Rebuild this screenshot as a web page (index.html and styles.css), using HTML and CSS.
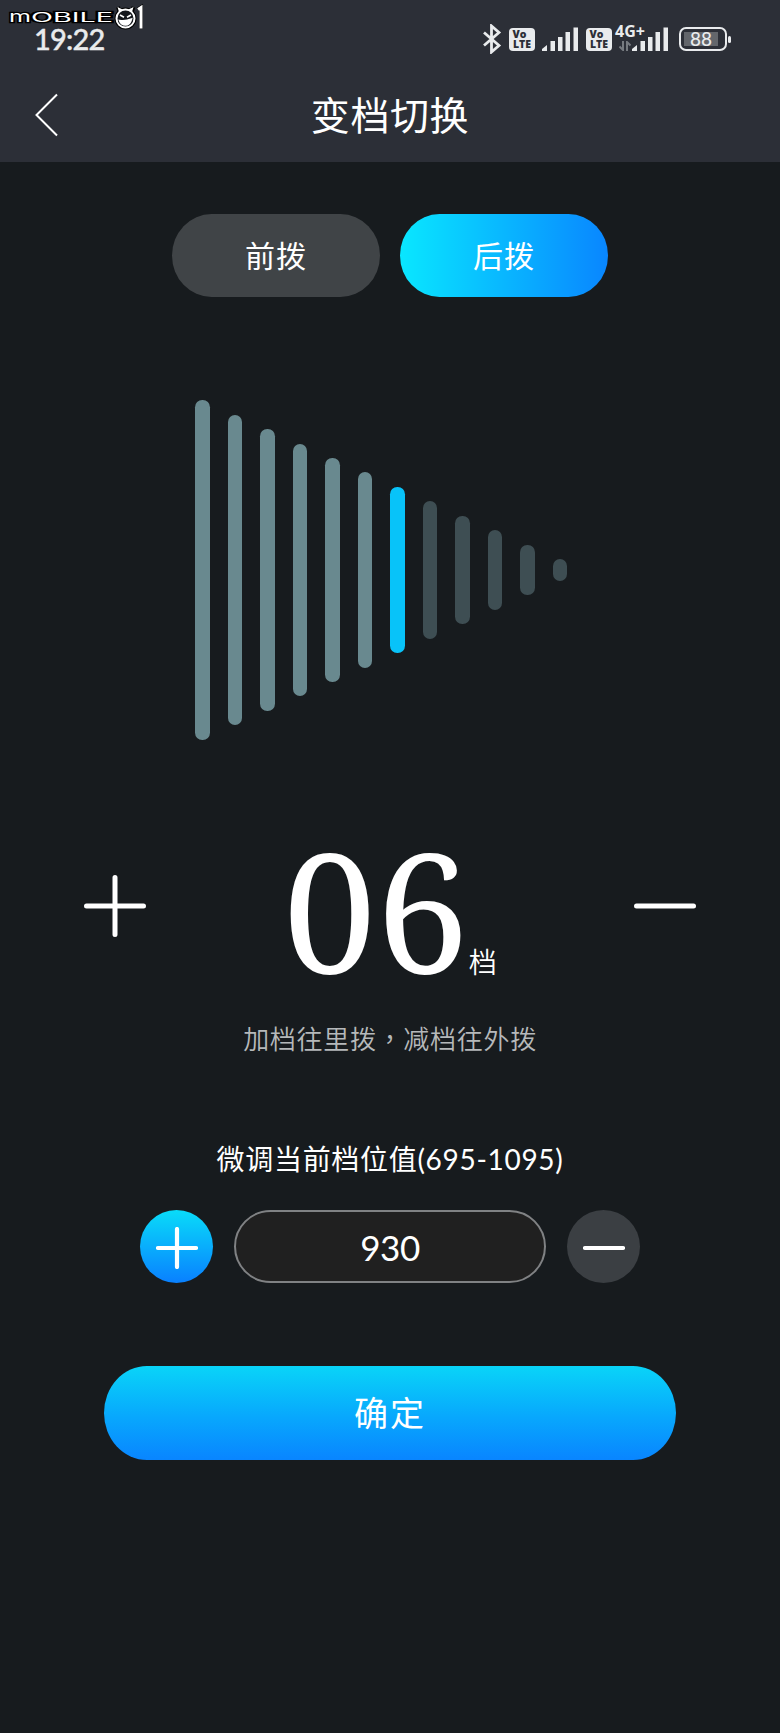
FILE: index.html
```html
<!DOCTYPE html>
<html lang="zh-CN">
<head>
  <meta charset="UTF-8" />
  <meta name="viewport" content="width=device-width, initial-scale=1.0"/>
  <title>变档切换</title>
  <link rel="stylesheet" href="styles.css">
</head>
<body>
  <svg class="watermark" width="150" height="34" viewBox="0 0 150 34">
    <g class="mark-outline">
      <text class="mark-m" x="9" y="22.3" textLength="22" lengthAdjust="spacingAndGlyphs">m</text>
      <text x="31" y="22.3" textLength="82" lengthAdjust="spacingAndGlyphs">OBILE</text>
      <circle cx="125.500" cy="18.500" r="9"/>
      <path d="M119.500 11l-1.500-4M132 11l1.500-4M138 9.500l3-2v21"/>
    </g>
    <g class="mark">
      <text class="mark-m" x="9" y="22.3" textLength="22" lengthAdjust="spacingAndGlyphs">m</text>
      <text x="31" y="22.3" textLength="82" lengthAdjust="spacingAndGlyphs">OBILE</text>
      <circle cx="125.500" cy="18.500" r="9"/>
      <path class="horns" d="M119 12l-1.500-5l5 2.500zM132 12l1.500-5l-5 2.500z"/>
      <path class="one" d="M138 9.500l3-2v21"/>
      <path class="face" d="M120 15l4 2.200M131 15l-4 2.200M119.500 20.500q6 1 12-1.500q-1.500 6-6 6t-6-4.500z"/>
    </g>
  </svg>

  <header class="header">
    <div class="status">
      <span class="time">19:22</span>
      <div class="status-icons">
        <svg width="20" height="30" viewBox="0 0 20 30">
          <path class="line" d="M2 8.500l15 13L9.500 28V2L17 8.500l-15 13"/>
        </svg>
        <span class="volte"><b>Vo</b><b>LTE</b></span>
        <svg class="signal" width="37" height="24" viewBox="0 0 37 24">
          <path class="fill" d="M0 24v-2l5-4v6zM8.500 14h4.500v10h-4.500zM16 10h4.500v14h-4.500zM23.500 5h4.500v19h-4.500zM31.500 0.500h4.500v23.500h-4.500z"/>
        </svg>
        <span class="volte"><b>Vo</b><b>LTE</b></span>
        <div class="network">
          <span class="net-type">4G+</span>
          <svg class="net-data" width="12" height="10" viewBox="0 0 12 10">
            <path d="M4 0v9L0.500 5.500M8 10V1l3.500 3.500"/>
          </svg>
          <svg class="signal" width="37" height="24" viewBox="0 0 37 24">
            <path class="fill" d="M0 24v-2l5-4v6zM8.500 14h4.500v10h-4.500zM16 10h4.500v14h-4.500zM23.500 5h4.500v19h-4.500zM31.500 0.500h4.500v23.500h-4.500z"/>
          </svg>
        </div>
        <div class="battery"><span>88</span></div>
      </div>
    </div>
    <div class="nav">
      <svg class="back" width="24" height="44" viewBox="0 0 24 44">
        <path d="M22 1.500L1.500 22L22 42.500"/>
      </svg>
      <h1>变档切换</h1>
    </div>
  </header>

  <main>
    <div class="tabs">
      <button class="tab">前拨</button>
      <button class="tab active">后拨</button>
    </div>

    <div class="gears" id="gears"></div>

    <div class="gear-row">
      <svg class="shift" width="62" height="62" viewBox="0 0 62 62">
        <path d="M2.500 31h57M31 2.500v57"/>
      </svg>
      <div class="gear"><span class="gear-num">06</span><span class="gear-unit">档</span></div>
      <svg class="shift" width="62" height="62" viewBox="0 0 62 62">
        <path d="M2.500 31h57"/>
      </svg>
    </div>
    <p class="hint">加档往里拨<span class="comma" lang="zh-TW">，</span>减档往外拨</p>

    <p class="fine-label">微调当前档位值(695-1095)</p>
    <div class="fine">
      <button class="round plus">
        <svg width="42" height="42" viewBox="0 0 42 42"><path d="M2 21h38M21 2v38"/></svg>
      </button>
      <div class="value">930</div>
      <button class="round">
        <svg width="42" height="42" viewBox="0 0 42 42"><path d="M2 21h38"/></svg>
      </button>
    </div>

    <button class="confirm">确定</button>
  </main>

  <script>
    // 12 gears, the 7th bar is the current one
    const gears = document.getElementById('gears');
    for (let i = 0; i < 12; i++) {
      const bar = document.createElement('span');
      bar.className = i < 6 ? 'bar' : i === 6 ? 'bar current' : 'bar off';
      bar.style.height = (339.5 - i * 28.87) + 'px';
      gears.appendChild(bar);
    }
  </script>
</body>
</html>
```
FILE: styles.css
```css
* {
  box-sizing: border-box;
}
body {
  margin: 0;
  min-height: 1733px;
  background-color: #171b1e;
  color: #fff;
  font-family: Lato, "Noto Sans CJK SC", sans-serif;
}
button {
  border: 0;
  padding: 0;
  color: #fff;
  font-family: inherit;
}
.watermark {
  position: absolute;
  left: 0;
  top: 0;
  font-family: Inter, sans-serif;
  font-size: 13px;
}
.mark-m {
  font-size: 16.5px;
}
.mark-outline {
  fill: none;
  stroke: #000;
  stroke-width: 2.5;
}
.mark-outline circle,
.mark-outline path {
  stroke-width: 4;
}
.mark {
  fill: #fff;
}
.mark circle {
  fill: #14171b;
  stroke: #fff;
  stroke-width: 2;
}
.one {
  fill: none;
  stroke: #fff;
  stroke-width: 3;
}
.face {
  stroke: #fff;
  stroke-width: 1.6;
}
.header {
  height: 162px;
  background-color: #2c2f37;
}
.status {
  height: 68px;
  padding: 21px 49px 0 34px;
  display: flex;
  justify-content: space-between;
  align-items: flex-start;
  color: #e9ebed;
}
.time {
  font-size: 29px;
  line-height: 36px;
  font-weight: 500;
  letter-spacing: -0.8px;
  -webkit-text-stroke: 0.4px #e9ebed;
}
.status-icons {
  display: flex;
  align-items: center;
  height: 36px;
}
.line {
  fill: none;
  stroke: #e9ebed;
  stroke-width: 2.8;
}
.fill {
  fill: #e9ebed;
}
.volte {
  display: flex;
  flex-direction: column;
  align-items: center;
  justify-content: center;
  width: 26px;
  height: 23px;
  margin-left: 7px;
  border-radius: 4px;
  background-color: #e9ebed;
  color: #2c2f37;
  font: bold 10.5px/10px "Open Sans", sans-serif;
}
.volte b:first-child {
  margin-right: 5px;
}
.signal {
  margin-left: 7px;
}
.network {
  position: relative;
  width: 54px;
  margin-left: 3px;
  display: flex;
  justify-content: flex-end;
}
.network .signal {
  margin: 0;
}
.net-type {
  position: absolute;
  left: 0;
  top: -4px;
  font: bold 16px/16px "Open Sans", sans-serif;
}
.net-data {
  position: absolute;
  left: 4px;
  top: 14px;
  fill: none;
  stroke: #777b80;
  stroke-width: 2;
}
.battery {
  position: relative;
  width: 48px;
  height: 24px;
  margin: 0 4px 0 10px;
  padding: 3px;
  border: 2px solid #e9ebed;
  border-radius: 7px;
}
.battery::after {
  content: "";
  position: absolute;
  right: -6px;
  top: 7px;
  width: 3px;
  height: 7px;
  border-radius: 2px;
  background-color: #e9ebed;
}
.battery span {
  display: block;
  width: 34px;
  background-color: #63666b;
  font-size: 19px;
  font-weight: 500;
  line-height: 14px;
  text-align: center;
}
.nav {
  position: relative;
  height: 94px;
  padding-bottom: 5px;
  display: flex;
  justify-content: center;
  align-items: center;
}
.back {
  position: absolute;
  left: 35px;
  top: 25px;
  fill: none;
  stroke: #fff;
  stroke-width: 2;
}
h1 {
  margin: 0;
  font-size: 39px;
  font-weight: 400;
  letter-spacing: 0.6px;
}
main {
  display: flex;
  flex-direction: column;
  align-items: center;
}
.tabs {
  display: flex;
  gap: 20px;
  margin-top: 52px;
}
.tab {
  width: 208px;
  height: 83px;
  padding-bottom: 4px;
  border-radius: 40px / 42px;
  background-color: #404447;
  font-size: 30px;
  letter-spacing: 1px;
}
.tab.active {
  background: linear-gradient(90deg, #09e7ff, #0986ff);
}
.gears {
  display: flex;
  align-items: center;
  gap: 18px;
  height: 340px;
  margin: 103px 0 0 -18px;
}
.bar {
  width: 14.5px;
  border-radius: 7.25px;
  background-color: #69898f;
}
.current {
  background-color: #08c3f9;
}
.off {
  background-color: #3e4e53;
}
.gear-row {
  display: flex;
  justify-content: space-between;
  align-items: center;
  width: 613px;
  height: 150px;
  margin-top: 91px;
}
.shift {
  fill: none;
  stroke: #fff;
  stroke-width: 5;
  stroke-linecap: round;
}
.gear {
  display: flex;
  align-items: baseline;
  padding-top: 5px;
}
.gear-num {
  font-family: "Noto Serif", "DejaVu Serif Condensed", "DejaVu Serif", serif;
  font-size: 166px;
  line-height: 150px;
}
.gear-unit {
  font-size: 28px;
  font-weight: 350;
}
.hint {
  margin: 32px 0 0;
  color: #b5b8ba;
  font-size: 26px;
  line-height: 50px;
  font-weight: 350;
  letter-spacing: 0.7px;
}
.comma {
  font-family: "Noto Sans CJK TC", sans-serif;
}
.fine-label {
  margin: 70px 0 0;
  font-size: 28px;
  line-height: 50px;
  letter-spacing: 0.7px;
}
.fine {
  display: flex;
  align-items: center;
  gap: 21px;
  margin-top: 26px;
}
.round {
  display: flex;
  justify-content: center;
  align-items: center;
  width: 73px;
  height: 73px;
  border-radius: 50%;
  background-color: #3b3f43;
}
.plus {
  background: linear-gradient(#09dcf9, #0980ff);
}
.round svg {
  margin: 2px 0 0 1px;
  fill: none;
  stroke: #fff;
  stroke-width: 4.2;
  stroke-linecap: round;
}
.value {
  width: 312px;
  height: 73px;
  border: 2px solid #808284;
  border-radius: 37px;
  background-color: #202020;
  font-size: 35px;
  letter-spacing: -0.5px;
  line-height: 70px;
  text-align: center;
}
.confirm {
  width: 572px;
  height: 94px;
  margin-top: 83px;
  padding-bottom: 3px;
  border-radius: 43px / 47px;
  background: linear-gradient(#09d4f8, #08a7fd 55%, #0985ff);
  font-size: 34px;
  letter-spacing: 2px;
}
```
